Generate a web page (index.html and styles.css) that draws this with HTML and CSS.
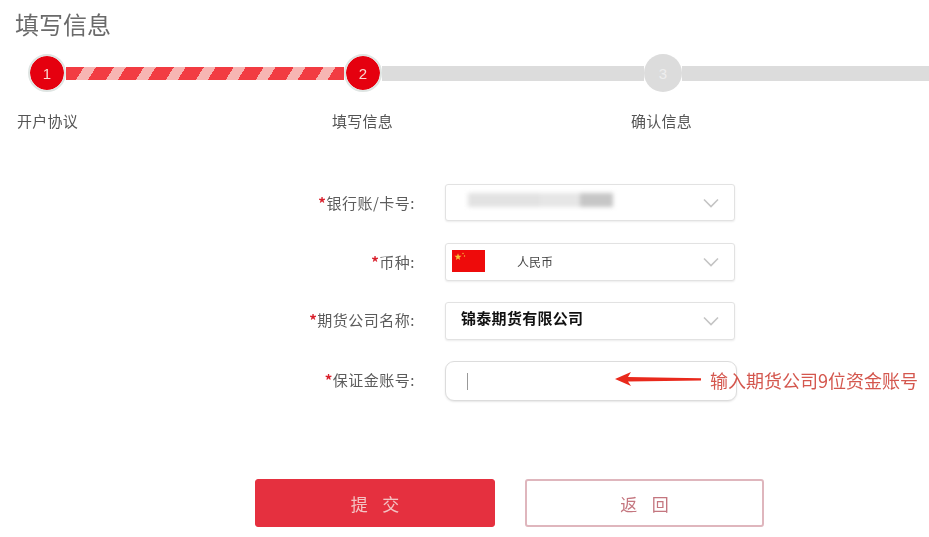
FILE: index.html
```html
<!DOCTYPE html>
<html lang="zh-CN">
<head>
<meta charset="utf-8">
<title>填写信息</title>
<link rel="stylesheet" href="styles.css">
</head>
<body>
<main class="page">
  <h1 class="title">填写信息</h1>
  <div class="track">
    <span class="node node-on">1</span>
    <span class="bar bar-done"></span>
    <span class="node node-on">2</span>
    <span class="bar bar-a"></span>
    <span class="node node-off">3</span>
    <span class="bar bar-b"></span>
  </div>
  <div class="step-labels">
    <span class="step-label s1">开户协议</span>
    <span class="step-label s2">填写信息</span>
    <span class="step-label s3">确认信息</span>
  </div>
  <form class="form">
    <div class="row r1">
      <label class="label"><i>*</i>银行账/卡号:</label>
      <div class="select"><span class="masked"><b></b><b></b><b></b></span><svg class="chev" viewBox="0 0 16 10"><path d="M1 1.5 8 8.5 15 1.5"/></svg></div>
    </div>
    <div class="row r2">
      <label class="label label-up"><i>*</i>币种:</label>
      <div class="select select-tall">
        <svg class="flag" viewBox="0 0 33 22"><rect width="33" height="22" fill="#ee0b0b"/><path d="M6 3.2 6.900 5.800 9.600 5.800 7.400 7.400 8.200 10 6 8.400 3.800 10 4.600 7.400 2.400 5.800 5.100 5.800Z" fill="#f5c33b"/><circle cx="11" cy="3.500" r=".7" fill="#f5c33b"/><circle cx="12.500" cy="6" r=".7" fill="#f5c33b"/></svg>
        <span class="currency">人民币</span>
        <svg class="chev" viewBox="0 0 16 10"><path d="M1 1.5 8 8.5 15 1.5"/></svg>
      </div>
    </div>
    <div class="row r3">
      <label class="label label-up2"><i>*</i>期货公司名称:</label>
      <div class="select select-tall"><span class="company">锦泰期货有限公司</span><svg class="chev" viewBox="0 0 16 10"><path d="M1 1.5 8 8.5 15 1.5"/></svg></div>
    </div>
    <div class="row r4">
      <label class="label label-up2"><i>*</i>保证金账号:</label>
      <div class="input"><span class="caret"></span></div>
      <svg class="arrow" viewBox="0 0 86 16"><path d="M0 8 16 1 13 6 86 7.200 86 9.400 13 10.400 16 15Z"/></svg>
      <span class="note">输入期货公司9位资金账号</span>
    </div>
    <div class="actions">
      <button type="button" class="btn btn-primary">提&nbsp;&nbsp;&nbsp;交</button>
      <button type="button" class="btn btn-ghost">返&nbsp;&nbsp;&nbsp;回</button>
    </div>
  </form>
</main>
</body>
</html>
```
FILE: styles.css
```css
* { box-sizing: border-box; }
html, body { margin: 0; height: 100%; background: #fff; }
body {
  font-family: "Noto Sans CJK SC", "Liberation Sans", sans-serif;
  color: #555;
  overflow: hidden;
}
.page { width: 929px; height: 537px; filter: blur(0.4px); }

.title {
  margin: 0;
  padding: 7px 0 0 15px;
  height: 48px;
  font-size: 24px;
  line-height: 34px;
  font-weight: 400;
  color: #6a6a6a;
}

.track { display: flex; align-items: center; height: 50px; padding-left: 28px; }
.node {
  flex: none;
  width: 38px;
  height: 38px;
  border-radius: 50%;
  display: flex;
  align-items: center;
  justify-content: center;
  font: 400 15px/1 "Liberation Sans", sans-serif;
  color: #fff;
  position: relative;
  z-index: 1;
}
.node-on { background: #e5000f; border: 2px solid #dfe5e3; background-clip: padding-box; color: #f8d8d0; }
.node-off { background: #dcdcdc; color: #eee; }
.bar { height: 15px; background: #dcdcdc; }
.bar-done {
  width: 278px;
  height: 13px;
  background: repeating-linear-gradient(122deg, #f23c42 0 15.300px, #f7b5b3 15.300px 25.400px);
}
.bar-a { width: 262px; }
.bar-b { flex: 1; }

.step-labels { display: flex; height: 24px; margin-top: 12px; font-size: 15px; letter-spacing: .25px; line-height: 22px; color: #555; }
.step-label { flex: none; width: 61px; white-space: nowrap; }
.s1 { margin-left: 17px; }
.s2 { margin-left: 254px; }
.s3 { margin-left: 238px; }

.form { padding-top: 50px; }
.row { display: flex; align-items: center; position: relative; }
.r1 { height: 37px; }
.r2 { height: 38px; margin-top: 22px; }
.r3 { height: 38px; margin-top: 21px; }
.r4 { height: 40px; margin-top: 21px; }
.label {
  width: 415px;
  flex: none;
  text-align: right;
  font-size: 15px;
  letter-spacing: 0.5px;
  color: #5c5c5c;
}
.label-up { padding-bottom: 2px; }
.label-up2 { padding-bottom: 3px; }
.label i { color: #d9202c; font-style: normal; font-weight: 700; }

.select {
  margin-left: 30px;
  width: 290px;
  height: 100%;
  display: flex;
  align-items: center;
  padding: 0 15px 0 6px;
  background: #fff;
  border: 1px solid #e2e2e2;
  border-radius: 3px;
  box-shadow: 0 1px 2px rgba(0,0,0,.08);
}
.chev { width: 16px; height: 10px; margin-left: auto; fill: none; stroke: #c4c4c4; stroke-width: 1.6; }
.masked { display: flex; margin-left: 16px; width: 145px; height: 16px; margin-bottom: 4px; filter: blur(2px); }
.masked b { display: block; height: 14px; }
.masked b:nth-child(1) { width: 72px; background: #e2e2e2; }
.masked b:nth-child(2) { width: 40px; background: #e6e6e6; }
.masked b:nth-child(3) { width: 33px; background: #c6c6c6; }
.flag { width: 33px; height: 22px; flex: none; margin-bottom: 2px; }
.currency { margin-left: 32px; font-size: 12px; color: #444; margin-bottom: 2px; }
.company { margin-left: 9px; margin-bottom: 7px; font-size: 15px; letter-spacing: .3px; font-weight: 700; color: #111; }

.input {
  margin-left: 30px;
  width: 292px;
  height: 100%;
  display: flex;
  align-items: center;
  padding-left: 21px;
  border: 1px solid #dcdcdc;
  border-radius: 9px;
  box-shadow: 0 1px 2px rgba(0,0,0,.1);
  background: #fff;
}
.caret { width: 1px; height: 17px; background: #999; }

.arrow { position: absolute; left: 615px; top: 10px; width: 86px; height: 16px; fill: #e9291c; }
.note {
  position: absolute;
  left: 710px;
  top: 6px;
  font-size: 18px;
  line-height: 26px;
  color: #d4574e;
  white-space: nowrap;
}

.actions { display: flex; gap: 30px; margin: 78px 0 0 255px; }
.btn {
  width: 240px;
  height: 48px;
  border-radius: 3px;
  font-family: inherit;
  font-size: 17px;
  word-spacing: 1px;
  padding: 0;
}
.btn-primary { background: #e5303f; border: 1px solid #e5303f; color: #f3c4c4; }
.btn-ghost { width: 239px; background: #fff; border: 2px solid #dfb6bd; color: #c4767f; }
```
